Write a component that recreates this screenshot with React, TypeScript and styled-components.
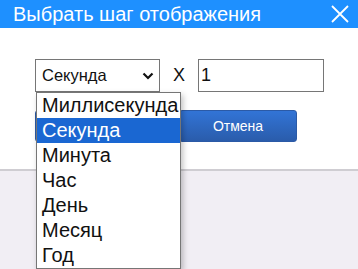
import React, { useState } from "react";
import styled, { createGlobalStyle } from "styled-components";

const GlobalStyle = createGlobalStyle`
  html, body {
    margin: 0;
    padding: 0;
    background: #f1eef4;
    font-family: "Liberation Sans", Arial, sans-serif;
  }
`;

const UNITS = ["Миллисекунда", "Секунда", "Минута", "Час", "День", "Месяц", "Год"];

const Page = styled.div`
  position: relative;
  width: 100%;
  height: 100vh;
  min-height: 269px;
  background: #f1eef4;
`;

const Dialog = styled.div`
  width: 100%;
  height: 171px;
  background: #fff;
  border-bottom: 2px solid #cfcdd2;
  box-sizing: border-box;
`;

const TitleBar = styled.div`
  display: flex;
  align-items: center;
  justify-content: space-between;
  height: 28px;
  padding: 0 6px 0 13px;
  background: #1e90ff;
  color: #fff;
  font-size: 20px;
`;

const CloseButton = styled.button`
  display: flex;
  align-items: center;
  justify-content: center;
  width: 24px;
  height: 24px;
  padding: 0;
  border: 0;
  background: transparent;
  cursor: pointer;
`;

const Body = styled.div`
  display: flex;
  flex-direction: column;
  gap: 18px;
  padding: 31px 0 0 35px;
`;

const Row = styled.div`
  display: flex;
  align-items: center;
`;

const SelectWrap = styled.div`
  position: relative;
`;

const SelectBox = styled.div`
  display: flex;
  align-items: center;
  justify-content: space-between;
  width: 125px;
  height: 33px;
  padding: 0 5px 0 6px;
  box-sizing: border-box;
  border: 1px solid #767676;
  background: #fff;
  font-size: 16.5px;
  color: #111;
`;

const Times = styled.span`
  margin: 0 13px 0 13px;
  font-size: 18px;
  color: #111;
`;

const NumberInput = styled.input`
  width: 126px;
  height: 33px;
  box-sizing: border-box;
  border: 1px solid #767676;
  padding: 0 2px;
  font-family: inherit;
  font-size: 18px;
  color: #111;
  outline: none;
`;

const List = styled.ul`
  position: absolute;
  top: 33px;
  left: 1px;
  width: 145px;
  margin: 0;
  padding: 0;
  list-style: none;
  background: #fff;
  border: 1px solid #767676;
  box-sizing: border-box;
  box-shadow: 2px 3px 6px rgba(0, 0, 0, 0.25);
  z-index: 10;
`;

const Option = styled.li<{ $active: boolean }>`
  height: 25px;
  line-height: 25px;
  padding-left: 5px;
  font-size: 20px;
  white-space: nowrap;
  color: ${(p) => (p.$active ? "#fff" : "#111")};
  background: ${(p) => (p.$active ? "#1a67d2" : "transparent")};
`;

const Buttons = styled.div`
  display: flex;
  gap: 26px;
`;

const Button = styled.button`
  width: 118px;
  height: 32px;
  border: 1px solid #2b5aa6;
  border-radius: 3px;
  background: linear-gradient(#3274d6, #2a5cab);
  color: #fff;
  font-family: inherit;
  font-size: 14px;
  cursor: pointer;
`;

export default function App() {
  const [unit, setUnit] = useState("Секунда");
  const [step, setStep] = useState("1");

  return (
    <Page>
      <GlobalStyle />
      <Dialog>
        <TitleBar>
          <span>Выбрать шаг отображения</span>
          <CloseButton aria-label="close">
            <svg width="18" height="18" viewBox="0 0 18 18">
              <path d="M1 1 L17 17 M17 1 L1 17" stroke="#fff" strokeWidth="1.8" />
            </svg>
          </CloseButton>
        </TitleBar>
        <Body>
          <Row>
            <SelectWrap>
              <SelectBox>
                <span>{unit}</span>
                <svg width="12" height="8" viewBox="0 0 12 8">
                  <path d="M1.5 1.5 L6 6 L10.5 1.5" fill="none" stroke="#111" strokeWidth="2.2" />
                </svg>
              </SelectBox>
              <List>
                {UNITS.map((u) => (
                  <Option key={u} $active={u === unit} onClick={() => setUnit(u)}>
                    {u}
                  </Option>
                ))}
              </List>
            </SelectWrap>
            <Times>X</Times>
            <NumberInput value={step} onChange={(e) => setStep(e.target.value)} />
          </Row>
          <Buttons>
            {/* OK button sits under the open list, its label is never visible */}
            <Button aria-label="ОК" />
            <Button>Отмена</Button>
          </Buttons>
        </Body>
      </Dialog>
    </Page>
  );
}
